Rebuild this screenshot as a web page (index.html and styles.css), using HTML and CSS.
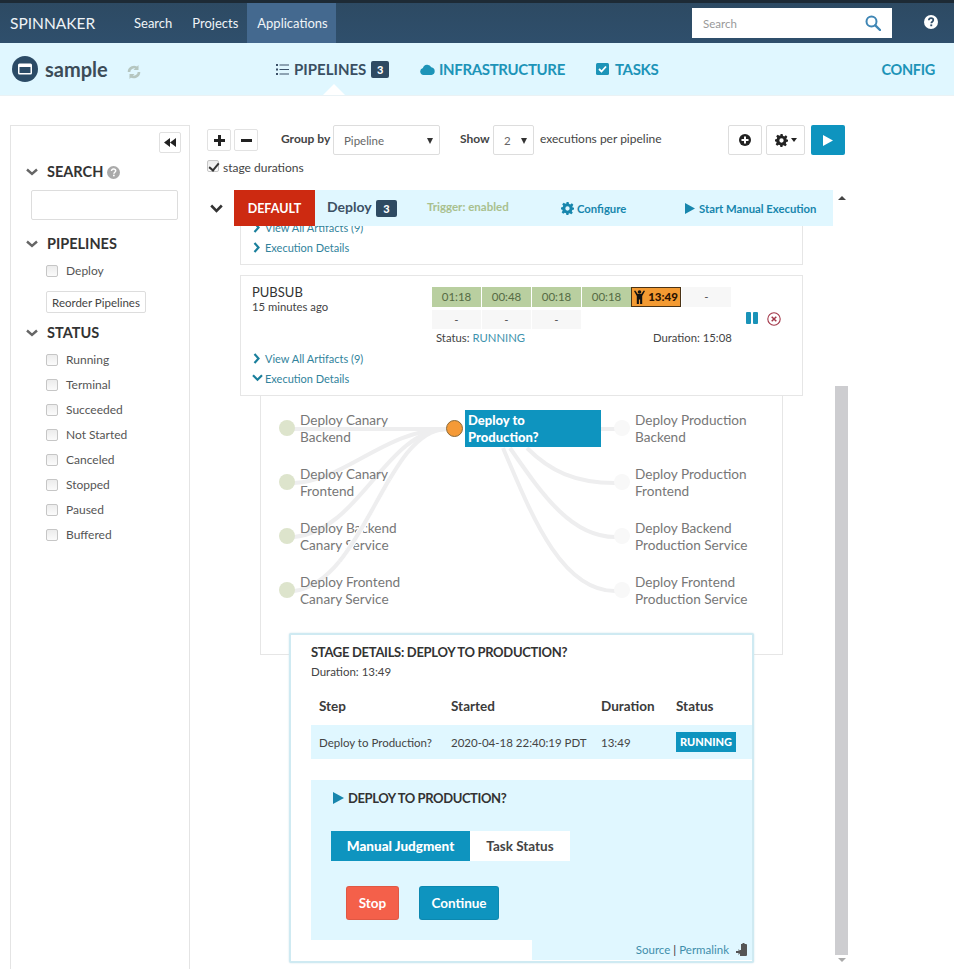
FILE: index.html
```html
<!DOCTYPE html>
<html lang="en">
<head>
<meta charset="utf-8">
<title>Spinnaker</title>
<link rel="stylesheet" href="styles.css">
</head>
<body>
<header class="topbar">
  <div class="brand">SPINNAKER</div>
  <nav class="topnav">
    <a class="topnav-item">Search</a>
    <a class="topnav-item">Projects</a>
    <a class="topnav-item active">Applications</a>
  </nav>
  <div class="global-search">
    <span>Search</span>
    <svg width="16" height="16" viewBox="0 0 16 16"><circle cx="6.5" cy="6.5" r="5" fill="none" stroke="#3f86b5" stroke-width="2"/><path d="M10.3 10.3 15 15" stroke="#3f86b5" stroke-width="2.4" stroke-linecap="round"/></svg>
  </div>
  <svg class="help" width="14" height="14" viewBox="0 0 14 14"><circle cx="7" cy="7" r="7" fill="#fff"/><path d="M4.8 5.3C4.9 3.9 5.8 3.2 7.1 3.2c1.300 0 2.200.8 2.200 1.900 0 1.700-2 1.600-2 3.200" fill="none" stroke="#2f4d68" stroke-width="1.700"/><rect x="6.300" y="9.400" width="1.900" height="1.800" fill="#2f4d68"/></svg>
</header>

<div class="subnav">
  <div class="app">
    <svg width="26" height="26" viewBox="0 0 26 26"><circle cx="13" cy="13" r="13" fill="#2b4b66"/><rect x="6" y="7.500" width="14" height="11" rx="1.500" fill="#fff"/><rect x="7.500" y="11" width="11" height="6" fill="#2b4b66"/></svg>
    <span class="app-name">sample</span>
    <svg class="refresh" width="14" height="14" viewBox="0 0 14 14"><path d="M2 7a5 5 0 0 1 8.500-3.500M12 7a5 5 0 0 1-8.500 3.500" fill="none" stroke="#b5c6c0" stroke-width="2.600"/><path d="M11.500 0v5h-5zM2.500 14V9h5z" fill="#b5c6c0"/></svg>
  </div>
  <nav class="sections">
    <a class="section current">
      <svg width="13" height="11" viewBox="0 0 13 11"><path d="M0 0h2v2H0zM0 4.500h2v2H0zM0 9h2v2H0zM3.500.4H13v1.200H3.500zM3.500 4.900H13v1.200H3.500zM3.500 9.400H13v1.200H3.500z" fill="#3a5068"/></svg>
      PIPELINES <span class="badge">3</span>
    </a>
    <a class="section infra">
      <svg width="15" height="11" viewBox="0 0 15 11"><path d="M3.500 11a3.500 3.500 0 0 1-.6-6.900A4.500 4.500 0 0 1 11.300 3.300 3.900 3.900 0 0 1 11.500 11z" fill="#1d94b8"/></svg>
      INFRASTRUCTURE
    </a>
    <a class="section tasks">
      <svg width="13" height="12" viewBox="0 0 13 12"><rect width="13" height="12" rx="1.500" fill="#1d94b8"/><path d="M3 6l2.500 2.500L10 3.500" fill="none" stroke="#fff" stroke-width="1.800"/></svg>
      TASKS
    </a>
  </nav>
  <a class="config">CONFIG</a>
  <span class="notch"></span>
</div>

<main class="main">
  <aside class="sidebar">
    <div class="collapse-row">
      <button class="collapse"><svg width="12" height="9" viewBox="0 0 12 9"><path d="M6 0v9L0 4.500zM12 0v9L6 4.500z" fill="#222"/></svg></button>
    </div>
    <h3 class="filter-head search-head">
      <svg class="chev" width="12" height="8" viewBox="0 0 12 8"><path d="M1 1.500 6 6l5-4.500" fill="none" stroke="#666" stroke-width="2.400"/></svg>
      SEARCH
      <svg width="13" height="13" viewBox="0 0 13 13"><circle cx="6.500" cy="6.500" r="6.500" fill="#aaa"/><path d="M4.500 5C4.500 3.700 5.400 3 6.600 3S8.700 3.700 8.700 4.800c0 1.500-1.800 1.400-1.800 2.900" fill="none" stroke="#fff" stroke-width="1.500"/><rect x="6" y="8.700" width="1.700" height="1.600" fill="#fff"/></svg>
    </h3>
    <input class="search-input" type="text" aria-label="Search">
    <h3 class="filter-head pipe-head">
      <svg class="chev" width="12" height="8" viewBox="0 0 12 8"><path d="M1 1.500 6 6l5-4.500" fill="none" stroke="#666" stroke-width="2.400"/></svg>
      PIPELINES
    </h3>
    <label class="check-row"><input type="checkbox">Deploy</label>
    <button class="reorder">Reorder Pipelines</button>
    <h3 class="filter-head status-head">
      <svg class="chev" width="12" height="8" viewBox="0 0 12 8"><path d="M1 1.500 6 6l5-4.500" fill="none" stroke="#666" stroke-width="2.400"/></svg>
      STATUS
    </h3>
    <div class="status-list">
      <label class="check-row"><input type="checkbox">Running</label>
      <label class="check-row"><input type="checkbox">Terminal</label>
      <label class="check-row"><input type="checkbox">Succeeded</label>
      <label class="check-row"><input type="checkbox">Not Started</label>
      <label class="check-row"><input type="checkbox">Canceled</label>
      <label class="check-row"><input type="checkbox">Stopped</label>
      <label class="check-row"><input type="checkbox">Paused</label>
      <label class="check-row"><input type="checkbox">Buffered</label>
    </div>
  </aside>

  <section class="content">
    <div class="toolbar">
      <button class="mini plus"><svg width="11" height="11" viewBox="0 0 11 11"><path d="M4 0h3v4h4v3H7v4H4V7H0V4h4z" fill="#222"/></svg></button>
      <button class="mini minus"><svg width="11" height="3" viewBox="0 0 11 3"><rect width="11" height="3" fill="#222"/></svg></button>
      <span class="tb-label groupby">Group by</span>
      <div class="select select-group"><span>Pipeline</span><i class="caret"></i></div>
      <span class="tb-label show">Show</span>
      <div class="select select-count"><span>2</span><i class="caret"></i></div>
      <span class="tb-text">executions per pipeline</span>
      <button class="tool tool-add"><svg width="12" height="12" viewBox="0 0 12 12"><circle cx="6" cy="6" r="6" fill="#222"/><path d="M5 2.500h2V5h2.500v2H7v2.500H5V7H2.500V5H5z" fill="#fff"/></svg></button>
      <button class="tool tool-gear">
        <svg width="13" height="13" viewBox="0 0 24 24"><path d="M10 0h4l.7 3.400 2.300 1 3-1.900 2.800 2.800-1.900 3 1 2.300L24 10v4l-3.100.7-1 2.300 1.900 3-2.800 2.800-3-1.900-2.300 1L14 24h-4l-.7-3.100-2.300-1-3 1.900-2.800-2.800 1.900-3-1-2.300L0 14v-4l3.100-.7 1-2.300-1.900-3L5 1.200l3 1.900 2.300-1zM12 8a4 4 0 1 0 0 8 4 4 0 0 0 0-8z" fill="#222" fill-rule="evenodd"/></svg>
        <i class="caret-small"></i>
      </button>
      <button class="tool-play"><svg width="10" height="11" viewBox="0 0 10 11"><path d="M0 0l10 5.500L0 11z" fill="#fff"/></svg></button>
    </div>
    <label class="durations"><input type="checkbox" checked>stage durations</label>

    <div class="exec-area">
      <div class="exec-list">
        <div class="group-head">
          <svg class="group-chev" width="13" height="9" viewBox="0 0 13 9"><path d="M1.200 1.500 6.500 6.800l5.300-5.300" fill="none" stroke="#333" stroke-width="2.600"/></svg>
          <span class="tag-default">DEFAULT</span>
          <div class="group-bar">
            <span class="group-name">Deploy</span>
            <span class="badge group-badge">3</span>
            <span class="trigger">Trigger: enabled</span>
            <a class="bar-link configure">
              <svg width="13" height="13" viewBox="0 0 24 24"><path d="M10 0h4l.7 3.400 2.300 1 3-1.900 2.800 2.800-1.900 3 1 2.300L24 10v4l-3.100.7-1 2.300 1.900 3-2.800 2.800-3-1.900-2.300 1L14 24h-4l-.7-3.100-2.300-1-3 1.900-2.800-2.800 1.900-3-1-2.300L0 14v-4l3.100-.7 1-2.300-1.900-3L5 1.200l3 1.900 2.300-1zM12 8a4 4 0 1 0 0 8 4 4 0 0 0 0-8z" fill="#1786ad" fill-rule="evenodd"/></svg>
              Configure
            </a>
            <a class="bar-link start">
              <svg width="10" height="11" viewBox="0 0 10 11"><path d="M0 0l10 5.500L0 11z" fill="#1786ad"/></svg>
              Start Manual Execution
            </a>
          </div>
        </div>

        <div class="card card-cut">
          <a class="exec-link"><svg width="8" height="11" viewBox="0 0 8 11"><path d="M1.500 1l4 4.500-4 4.500" fill="none" stroke="#1a7f9c" stroke-width="2.200"/></svg>View All Artifacts (9)</a>
          <a class="exec-link"><svg width="8" height="11" viewBox="0 0 8 11"><path d="M1.500 1l4 4.500-4 4.500" fill="none" stroke="#1a7f9c" stroke-width="2.200"/></svg>Execution Details</a>
        </div>

        <div class="card card-run">
          <div class="run-top">
            <div class="run-id">
              <div class="run-name">PUBSUB</div>
              <div class="run-time">15 minutes ago</div>
            </div>
            <div class="run-stages">
              <div class="stage-row">
                <span class="stage done">01:18</span>
                <span class="stage done">00:48</span>
                <span class="stage done">00:18</span>
                <span class="stage done">00:18</span>
                <span class="stage waiting">
                  <svg width="11" height="14" viewBox="0 0 11 14"><circle cx="5.500" cy="2" r="1.800" fill="#111"/><path d="M0 1l1.200-.6L3.700 4h3.600L9.800.4 11 1 8.200 6v8H6.100V9.500H4.900V14H2.800V6z" fill="#111"/></svg>
                  13:49
                </span>
                <span class="stage todo">-</span>
              </div>
              <div class="stage-row second">
                <span class="stage todo">-</span>
                <span class="stage todo">-</span>
                <span class="stage todo">-</span>
              </div>
              <div class="run-status">
                <span class="status-text">Status: <em>RUNNING</em></span>
                <span class="duration-text">Duration: 15:08</span>
              </div>
            </div>
            <div class="run-actions">
              <svg width="12" height="12" viewBox="0 0 12 12"><rect width="5" height="12" rx="1" fill="#1a93b8"/><rect x="7" width="5" height="12" rx="1" fill="#1a93b8"/></svg>
              <svg width="14" height="14" viewBox="0 0 14 14"><circle cx="7" cy="7" r="6.200" fill="none" stroke="#a3384a" stroke-width="1.100"/><path d="M4.700 4.700l4.600 4.600M9.300 4.700l-4.600 4.600" stroke="#a3384a" stroke-width="1.500"/></svg>
            </div>
          </div>
          <a class="exec-link"><svg width="8" height="11" viewBox="0 0 8 11"><path d="M1.500 1l4 4.500-4 4.500" fill="none" stroke="#1a7f9c" stroke-width="2.200"/></svg>View All Artifacts (9)</a>
          <a class="exec-link"><svg class="down" width="11" height="8" viewBox="0 0 11 8"><path d="M1 1.200l4.500 4.500L10 1.200" fill="none" stroke="#1a7f9c" stroke-width="2.200"/></svg>Execution Details</a>
        </div>

        <div class="graph">
          <svg class="links" width="521" height="258" viewBox="261 395 521 258">
            <g class="link">
              <path d="M294 428H446"/>
              <path d="M294 482C345 480 385 429 446 428"/>
              <path d="M294 536C360 530 385 430 446 428"/>
              <path d="M294 590C365 580 385 430 446 428"/>
              <path d="M601 428H615"/>
              <path d="M527 447C550 470 575 482 615 482"/>
              <path d="M510 447C540 490 570 536 615 536"/>
              <path d="M503 447C530 510 560 590 615 590"/>
            </g>
          </svg>
          <div class="graph-col col-left">
            <div class="node"><i class="dot dot-done"></i><span>Deploy Canary<br>Backend</span></div>
            <div class="node"><i class="dot dot-done"></i><span>Deploy Canary<br>Frontend</span></div>
            <div class="node"><i class="dot dot-done"></i><span>Deploy Backend<br>Canary Service</span></div>
            <div class="node"><i class="dot dot-done"></i><span>Deploy Frontend<br>Canary Service</span></div>
          </div>
          <div class="graph-col col-mid">
            <div class="node node-active"><i class="dot dot-run"></i><span>Deploy to<br>Production?</span></div>
          </div>
          <div class="graph-col col-right">
            <div class="node"><i class="dot dot-todo"></i><span>Deploy Production<br>Backend</span></div>
            <div class="node"><i class="dot dot-todo"></i><span>Deploy Production<br>Frontend</span></div>
            <div class="node"><i class="dot dot-todo"></i><span>Deploy Backend<br>Production Service</span></div>
            <div class="node"><i class="dot dot-todo"></i><span>Deploy Frontend<br>Production Service</span></div>
          </div>
          <svg class="links links-over" width="521" height="258" viewBox="261 395 521 258">
            <path class="over-halo" pathLength="100" d="M294 590C365 580 385 430 446 428"/>
            <path class="over-line" pathLength="100" d="M294 590C365 580 385 430 446 428"/>
          </svg>
        </div>

        <div class="details">
          <h4 class="details-title">STAGE DETAILS: DEPLOY TO PRODUCTION?</h4>
          <div class="details-duration">Duration: 13:49</div>
          <table class="steps">
            <thead>
              <tr><th>Step</th><th>Started</th><th>Duration</th><th>Status</th></tr>
            </thead>
            <tbody>
              <tr><td>Deploy to Production?</td><td>2020-04-18 22:40:19 PDT</td><td>13:49</td><td><span class="tag-running">RUNNING</span></td></tr>
            </tbody>
          </table>
          <div class="judgment">
            <div class="judgment-title">
              <svg width="11" height="12" viewBox="0 0 11 12"><path d="M0 0l11 6-11 6z" fill="#1786ad"/></svg>
              DEPLOY TO PRODUCTION?
            </div>
            <div class="tabs">
              <span class="tab tab-on">Manual Judgment</span>
              <span class="tab">Task Status</span>
            </div>
            <div class="actions">
              <button class="btn-stop">Stop</button>
              <button class="btn-continue">Continue</button>
            </div>
          </div>
          <div class="details-foot">
            <div class="foot-links">
              <a>Source</a><span class="sep">|</span><a>Permalink</a>
              <svg width="12" height="13" viewBox="0 0 12 13"><path d="M5 1h1.500V0h2v1H10a1 1 0 0 1 1 1v10a1 1 0 0 1-1 1H4V7H5z" fill="#555"/><path d="M0 8h2.500V6L5 9l-2.500 3v-2H0z" fill="#555"/></svg>
            </div>
          </div>
        </div>
      </div>

      <div class="scrollbar">
        <i class="arrow-up"></i>
        <div class="thumb"></div>
        <i class="arrow-down"></i>
      </div>
    </div>
  </section>
</main>
</body>
</html>
```
FILE: styles.css
```css
* { box-sizing: border-box; }
html, body { margin: 0; padding: 0; }
body {
  width: 954px;
  height: 969px;
  overflow: hidden;
  background: #fff;
  color: #444;
  font-family: "Lato", "Noto Sans", sans-serif;
  font-size: 13px;
  line-height: 17px;
}
button { font-family: inherit; cursor: pointer; }
input[type="checkbox"] {
  appearance: none;
  position: relative;
  margin: 0;
  width: 12px;
  height: 12px;
  flex: none;
  background: linear-gradient(#ececec, #fbfbfb);
  border: 1px solid #c6c6c6;
  border-radius: 2px;
}
input[type="checkbox"]:checked::after {
  content: "";
  position: absolute;
  left: 3px;
  top: 0;
  width: 4px;
  height: 8px;
  border-right: 2px solid #333;
  border-bottom: 2px solid #333;
  transform: rotate(40deg);
}

/* top bar */
.topbar {
  height: 43px;
  display: flex;
  align-items: stretch;
  border-top: 3px solid #1d2a35;
  background: linear-gradient(#2d4a63, #2f4f6c);
  color: #fff;
}
.brand { width: 124px; padding-left: 10px; font-size: 15.500px; line-height: 40px; color: #eef3f6; }
.topnav { display: flex; }
.topnav-item { padding: 0 10px; line-height: 40px; font-size: 13px; color: #f0f4f7; }
.topnav-item.active { background: #44698f; margin-left: -1px; width: 89px; }
.global-search {
  margin: 5px 0 0 auto;
  width: 200px;
  height: 30px;
  background: #fff;
  padding: 0 11px;
  display: flex;
  align-items: center;
  justify-content: space-between;
  color: #999;
  font-size: 11.500px;
}
.help { margin: 12px 16px 0 32px; }

/* sub nav */
.subnav {
  position: relative;
  height: 52px;
  display: flex;
  align-items: center;
  background: #e0f7ff;
  box-shadow: 0 1px 0 #eaf2f5;
}
.app { width: 276px; padding-left: 12px; display: flex; align-items: center; }
.app-name { margin-left: 7px; font-size: 20px; font-weight: 700; color: #3c4c58; }
.refresh { margin: 5px 0 0 19px; }
.sections { display: flex; align-items: center; font-size: 15px; font-weight: 700; letter-spacing: -.35px; }
.section { display: flex; align-items: center; color: #1d94b8; }
.section svg { margin-right: 4px; }
.section.current { color: #3a4f62; width: 144px; letter-spacing: 0; }
.section.current svg { margin-right: 5px; }
.section.infra { width: 176px; }
.section.tasks svg { margin-right: 6px; }
.badge {
  display: inline-block;
  margin-left: 5px;
  width: 18px;
  height: 17px;
  border-radius: 2px;
  background: #2e4a62;
  color: #fff;
  font-size: 11px;
  font-weight: 900;
  letter-spacing: 0;
  line-height: 17px;
  text-align: center;
}
.config { margin-left: auto; margin-right: 19px; font-size: 14.500px; font-weight: 700; letter-spacing: -.3px; color: #1d94b8; }
.notch {
  position: absolute;
  left: 323px;
  bottom: 0;
  width: 0;
  height: 0;
  border-left: 11px solid transparent;
  border-right: 11px solid transparent;
  border-bottom: 11px solid #fff;
}

/* layout */
.main { display: flex; padding-top: 30px; }

/* sidebar */
.sidebar {
  width: 180px;
  height: 860px;
  margin-left: 10px;
  border: 1px solid #e4e4e4;
  border-bottom: 0;
  padding: 6px 0 0 15px;
  flex: none;
}
.collapse-row { display: flex; justify-content: flex-end; padding-right: 8px; }
.collapse {
  width: 22px;
  height: 21px;
  padding: 0;
  background: #fff;
  border: 1px solid #e0e0e0;
  border-radius: 2px;
  display: flex;
  align-items: center;
  justify-content: center;
}
.filter-head {
  display: flex;
  align-items: center;
  margin: 0;
  font-size: 14.500px;
  line-height: 20px;
  font-weight: 700;
  color: #333;
}
.chev { margin-right: 9px; }
.search-head { margin-top: 9px; }
.search-head svg:last-child { margin-left: 4px; }
.search-input {
  display: block;
  margin: 8px 0 0 5px;
  width: 147px;
  height: 30px;
  border: 1px solid #ddd;
  border-radius: 2px;
  background: #fff;
}
.pipe-head { margin-top: 14px; }
.check-row { display: flex; align-items: center; margin-left: 20px; height: 25px; color: #555; font-size: 12px; }
.check-row input { margin-right: 8px; }
.pipe-head + .check-row { margin-top: 4px; }
.reorder {
  display: block;
  margin: 8px 0 0 20px;
  width: 100px;
  height: 22px;
  padding: 0;
  background: #fff;
  border: 1px solid #ddd;
  border-radius: 2px;
  color: #444;
  font-size: 11.500px;
}
.status-head { margin-top: 10px; }
.status-list { margin-top: 4px; }

/* content */
.content { margin-left: 17px; width: 641px; flex: none; }
.toolbar { display: flex; align-items: flex-start; height: 30px; }
.mini {
  width: 24px;
  height: 22px;
  margin-top: 4px;
  padding: 0;
  background: #fff;
  border: 1px solid #e2e2e2;
  border-radius: 2px;
  display: flex;
  align-items: center;
  justify-content: center;
}
.minus { margin-left: 3px; }
.tb-label { font-size: 12px; font-weight: 700; color: #444; line-height: 28px; }
.groupby { margin-left: 23px; width: 52px; }
.select {
  position: relative;
  height: 30px;
  border: 1px solid #ddd;
  border-radius: 2px;
  padding-left: 10px;
  line-height: 30px;
  font-size: 11.500px;
  color: #666;
}
.select-group { width: 107px; }
.select-count { width: 41px; }
.caret {
  position: absolute;
  right: 6px;
  top: 12px;
  border-left: 3.500px solid transparent;
  border-right: 3.500px solid transparent;
  border-top: 6px solid #333;
}
.show { margin-left: 20px; width: 33px; }
.tb-text { margin-left: 6px; width: 188px; line-height: 28px; font-size: 12px; color: #444; }
.tool {
  height: 30px;
  padding: 0;
  background: #fff;
  border: 1px solid #ddd;
  border-radius: 2px;
  display: flex;
  align-items: center;
  justify-content: center;
}
.tool-add { width: 34px; }
.tool-gear { width: 39px; margin-left: 4px; gap: 3px; }
.caret-small {
  border-left: 3.500px solid transparent;
  border-right: 3.500px solid transparent;
  border-top: 4px solid #222;
}
.tool-play {
  width: 34px;
  height: 30px;
  margin-left: 6px;
  padding: 0;
  border: 0;
  border-radius: 2px;
  background: #0e94bf;
  display: flex;
  align-items: center;
  justify-content: center;
}
.durations { display: flex; align-items: center; height: 25px; font-size: 12px; color: #444; }
.durations input { margin: 0 4px 4px 0; }
.exec-area { display: flex; margin-top: 10px; }
.exec-list { width: 626px; flex: none; }

.group-head { display: flex; align-items: center; height: 36px; }
.group-chev { margin: 0 11px 0 3px; flex: none; }
.tag-default {
  width: 81px;
  height: 36px;
  background: #cd2a11;
  color: #fff;
  font-size: 12.500px;
  font-weight: 700;
  line-height: 37px;
  text-align: center;
  flex: none;
}
.group-bar {
  width: 518px;
  height: 36px;
  display: flex;
  align-items: center;
  background: #e0f7ff;
  padding-left: 12px;
}
.group-name { width: 49px; margin-bottom: 4px; font-size: 14px; font-weight: 700; color: #3c5064; }
.group-badge { width: 21px; margin-left: 0; }
.trigger { margin: 0 0 3px 30px; width: 134px; font-size: 11.500px; font-weight: 700; color: #a9c08e; }
.bar-link { display: flex; align-items: center; font-size: 11.300px; font-weight: 700; color: #1786ad; }
.bar-link svg { margin-right: 3px; }
.configure { width: 124px; }
.start svg { margin-right: 4px; }

.card {
  margin-left: 33px;
  width: 563px;
  border: 1px solid #e6e6e6;
  background: #fff;
}
.card-cut {
  height: 39px;
  border-top: 0;
  display: flex;
  flex-direction: column;
  justify-content: flex-end;
  overflow: hidden;
  padding-bottom: 7px;
}
.exec-link {
  display: flex;
  align-items: center;
  flex: none;
  height: 20px;
  margin-left: 12px;
  font-size: 11px;
  color: #31839c;
}
.exec-link svg { margin-right: 4px; flex: none; }
.exec-link svg.down { margin: 0 2px 0 -1px; }
.card-run { height: 121px; margin-top: 10px; padding-top: 11px; position: relative; }
.run-top { display: flex; height: 61px; }
.run-id { width: 180px; margin: -2px 0 0 11px; flex: none; }
.run-name { font-size: 13px; line-height: 15px; color: #333; }
.run-time { font-size: 11.300px; line-height: 13px; color: #444; }
.run-stages { width: 310px; flex: none; }
.stage-row { display: flex; height: 20px; }
.stage-row.second { margin-top: 3px; height: 19px; }
.stage {
  width: 49px;
  margin-right: 1px;
  text-align: center;
  font-size: 11.500px;
  line-height: 20px;
  display: flex;
  align-items: center;
  justify-content: center;
}
.done { background: #b9cfa0; color: #556b44; }
.todo { background: #f7f7f7; color: #555; }
.waiting {
  background: #f39a32;
  border: 1px solid #4a3316;
  color: #2a1200;
  font-weight: 900;
  gap: 3px;
  width: 50px;
  margin-left: -1px;
  margin-right: 1px;
}
.run-status { display: flex; height: 18px; padding-left: 4px; font-size: 11.300px; line-height: 18px; color: #444; }
.status-text { width: 217px; }
.status-text em { font-style: normal; color: #3e93ad; }
.duration-text { flex: none; }
.run-actions { display: flex; align-items: flex-start; gap: 9px; margin-left: 4px; padding-top: 25px; }

.graph {
  position: relative;
  margin-left: 53px;
  width: 523px;
  height: 259px;
  border: 1px solid #e6e6e6;
  border-top: 0;
  display: flex;
  background: #fff;
}
.graph-col { position: relative; display: flex; flex-direction: column; padding-top: 5px; }
.col-left { width: 185px; padding-left: 18px; }
.col-mid { width: 168px; }
.col-right { width: 161px; }
.node {
  height: 54px;
  display: flex;
  font-size: 13.600px;
  line-height: 17px;
  color: #777;
}
.node span { display: block; padding-top: 11px; white-space: nowrap; }
.dot { width: 16px; height: 16px; border-radius: 50%; margin-top: 19px; flex: none; }
.col-left .dot { margin-right: 5px; }
.dot-done { background: #dde4cc; }
.dot-todo { background: #f8f8f8; }
.col-right .dot { margin-right: 5px; }
.dot-run {
  background: #f59a37;
  border: 1px solid #8a6a3a;
  margin: 19px 2px 0 0;
  width: 17px;
  height: 17px;
}
.col-mid .node span {
  width: 136px;
  height: 37px;
  margin-top: 9px;
  padding: 2px 3px 0;
  background: #0e94bf;
  color: #fff;
  font-weight: 900;
  font-size: 13px;
}
.links { position: absolute; left: 0; top: 0; pointer-events: none; }
.links path { fill: none; }
.link path { stroke: #eeeeef; stroke-width: 4; }
.links-over path { stroke-dasharray: 42 100; stroke-dashoffset: -24; }
.links .over-halo { stroke: #fff; stroke-width: 6; }
.links .over-line { stroke: #eeeeef; stroke-width: 4; }

.details {
  position: relative;
  margin: -22px 0 0 82px;
  width: 465px;
  height: 330px;
  background: #fff;
  border: 2px solid #cfeaf2;
  border-radius: 2px;
  box-shadow: 0 0 2px #cfe3ea;
}
.details-title { margin: 8px 0 0 20px; font-size: 13px; letter-spacing: -.3px; line-height: 18px; font-weight: 700; color: #333; }
.details-duration { margin: 3px 0 0 20px; font-size: 11.500px; line-height: 16px; color: #444; }
.steps { margin: 8px 0 0 20px; width: 441px; border-collapse: collapse; table-layout: fixed; }
.steps th { height: 37px; padding: 0 0 1px 8px; text-align: left; font-size: 13.500px; font-weight: 700; color: #3b3b3b; }
.steps th:nth-child(1) { width: 140px; }
.steps th:nth-child(2) { width: 150px; padding-left: 0; }
.steps th:nth-child(3) { width: 75px; padding-left: 0; }
.steps th:nth-child(4) { padding-left: 0; }
.steps td { height: 34px; padding: 0; background: #e0f7ff; font-size: 11.500px; color: #444; }
.steps td:first-child { padding-left: 8px; }
.tag-running {
  display: inline-block;
  width: 60px;
  height: 20px;
  background: #0e94bf;
  color: #fff;
  font-size: 11px;
  font-weight: 900;
  line-height: 20px;
  text-align: center;
  vertical-align: middle;
}
.judgment {
  margin: 21px 0 0 20px;
  width: 441px;
  height: 160px;
  background: #e0f7ff;
  padding: 11px 0 0 22px;
}
.judgment-title { display: flex; align-items: center; height: 14px; font-size: 13px; letter-spacing: -.4px; font-weight: 700; color: #333; }
.judgment-title svg { margin-right: 4px; }
.tabs { display: flex; margin: 26px 0 0 -2px; }
.tab {
  width: 100px;
  height: 30px;
  background: #fff;
  line-height: 30px;
  text-align: center;
  font-size: 13.500px;
  font-weight: 700;
  color: #444;
}
.tab-on { width: 139px; background: #0e94bf; color: #fff; font-weight: 900; }
.actions { display: flex; gap: 20px; margin: 25px 0 0 13px; }
.btn-stop, .btn-continue {
  height: 34px;
  padding: 0;
  border: 1px solid rgba(0,0,0,.08);
  border-radius: 3px;
  color: #fff;
  font-size: 13.500px;
  font-weight: 700;
}
.btn-stop { width: 53px; background: #f4604a; }
.btn-continue { width: 80px; background: #0e94bf; }
.details-foot { display: flex; justify-content: flex-end; }
.foot-links {
  width: 220px;
  height: 20px;
  display: flex;
  align-items: center;
  justify-content: flex-end;
  padding: 0 4px 2px 0;
  background: #e0f7ff;
  font-size: 11.500px;
  color: #3f8eab;
}
.foot-links .sep { margin: 0 3px; color: #333; }
.foot-links svg { margin-left: 7px; }

/* scrollbar */
.scrollbar { width: 13px; margin-left: 2px; display: flex; flex-direction: column; align-items: center; flex: none; }
.arrow-up {
  margin-top: 6px;
  border-left: 4px solid transparent;
  border-right: 4px solid transparent;
  border-bottom: 4px solid #444;
}
.thumb { width: 13px; height: 569px; margin-top: 186px; background: #cdcdd0; }
.arrow-down {
  margin-top: 3px;
  border-left: 4px solid transparent;
  border-right: 4px solid transparent;
  border-top: 4px solid #aaa;
}
```
